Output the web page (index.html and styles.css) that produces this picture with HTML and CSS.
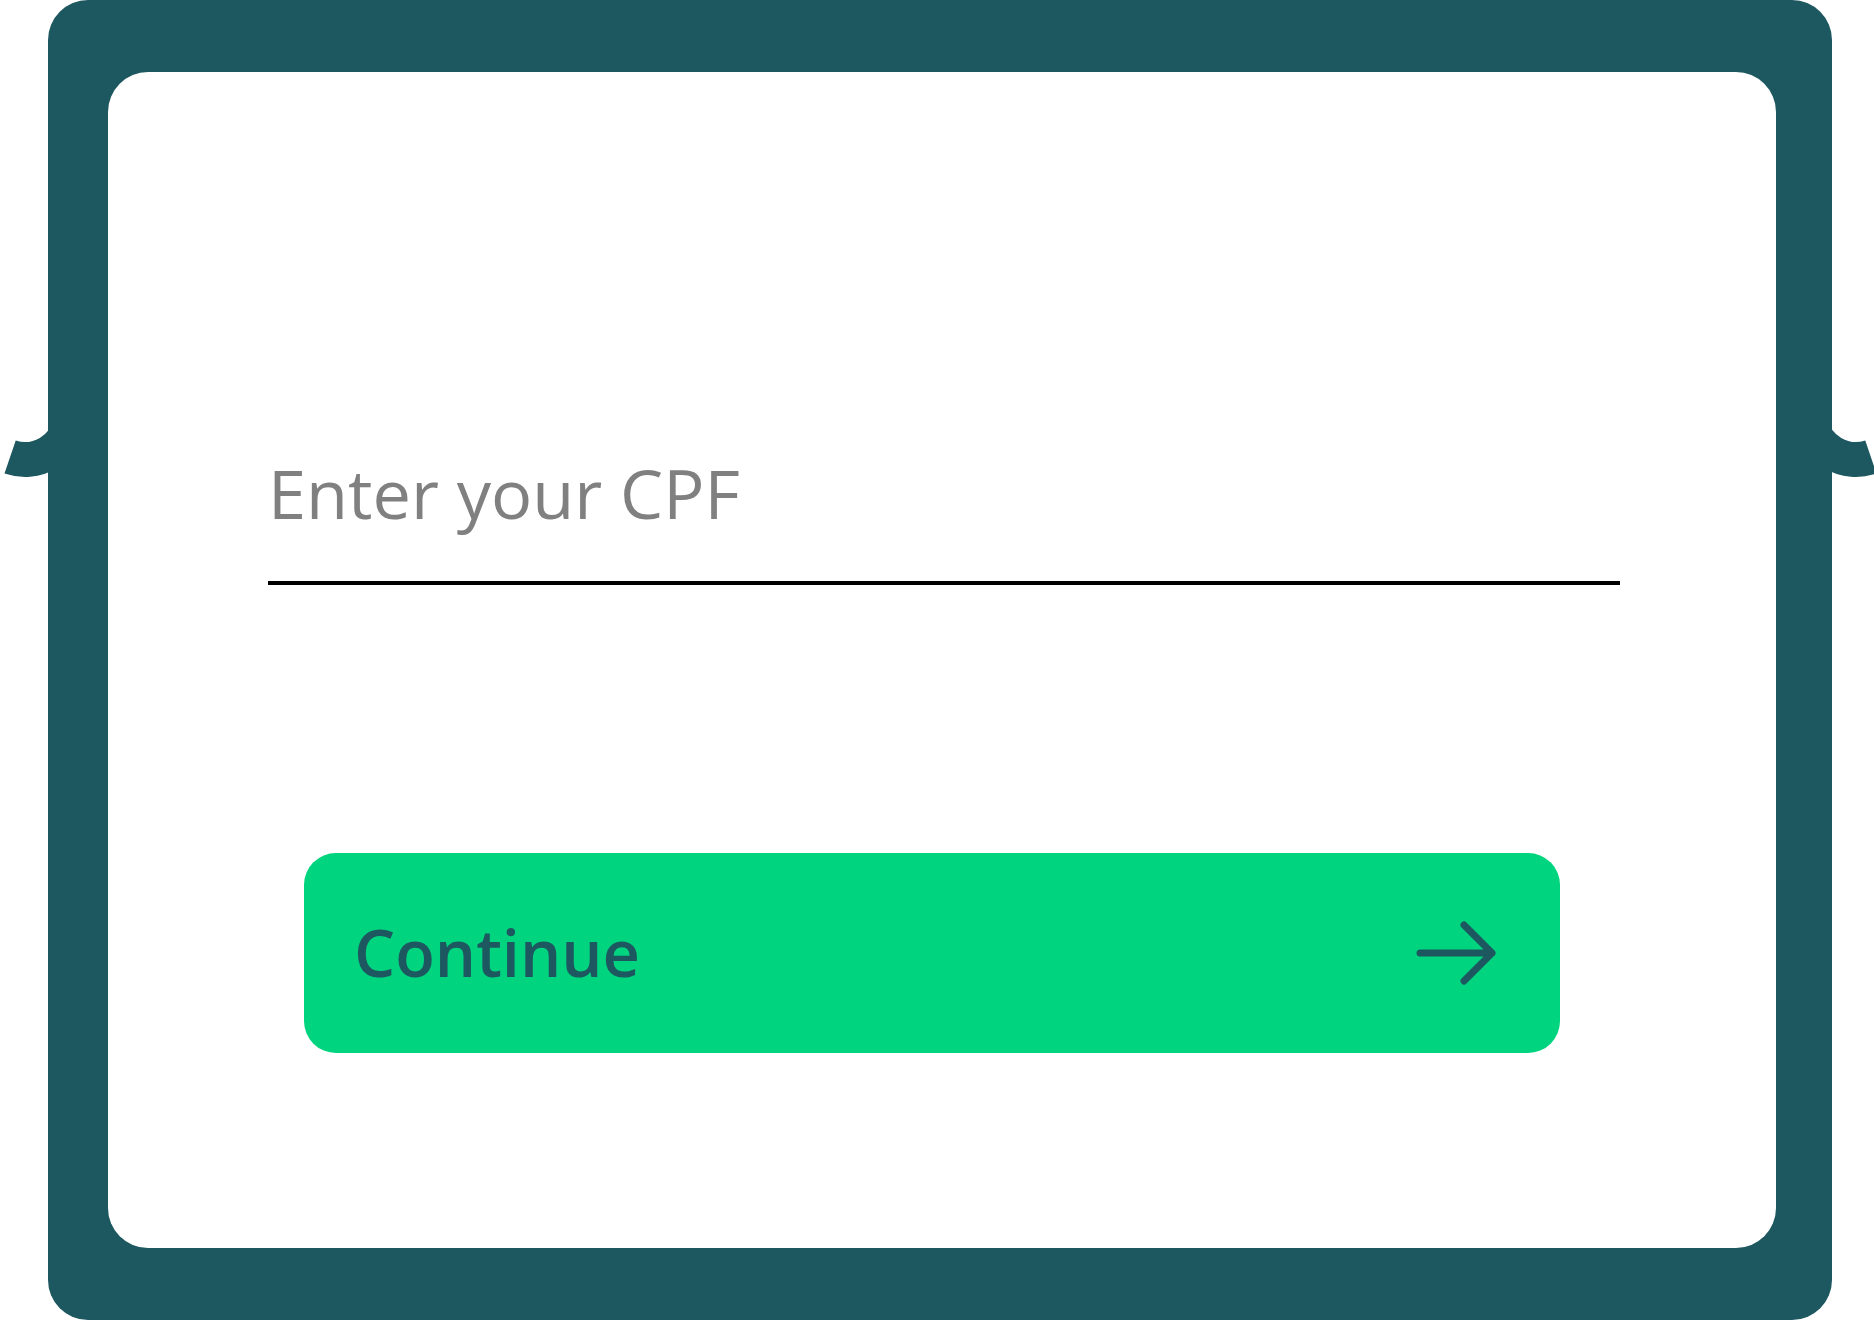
FILE: index.html
```html
<!DOCTYPE html>
<html lang="en">
<head>
<meta charset="utf-8">
<title>Enter your CPF</title>
<link rel="stylesheet" href="styles.css">
</head>
<body>
<div class="stage">
  <svg class="ear ear-left" width="60" height="110" viewBox="0 0 60 110" aria-hidden="true">
    <path d="M10.1 79 A46.5 46.5 0 0 0 70.8 43.1" fill="none" stroke="#1D5861" stroke-width="35"/>
  </svg>
  <svg class="ear ear-right" width="60" height="110" viewBox="0 0 60 110" aria-hidden="true">
    <path d="M10.1 79 A46.5 46.5 0 0 0 70.8 43.1" fill="none" stroke="#1D5861" stroke-width="35"/>
  </svg>
  <div class="frame">
    <div class="panel">
      <div class="field">
        <div class="field-label">Enter your CPF</div>
        <div class="field-line"></div>
      </div>
      <button class="continue" type="button">
        <span class="continue-text">Continue</span>
        <svg class="continue-arrow" width="96" height="80" viewBox="0 0 96 80" aria-hidden="true">
          <path d="M14 40 H86 M58 12 L86 40 L58 68" fill="none" stroke="#1D5861" stroke-width="7" stroke-linecap="round" stroke-linejoin="round"/>
        </svg>
      </button>
    </div>
  </div>
</div>
</body>
</html>
```
FILE: styles.css
```css
html, body {
  margin: 0;
  padding: 0;
  background: #ffffff;
  overflow: hidden;
}

.stage {
  position: relative;
  width: 1874px;
  height: 1320px;
}

.ear {
  position: absolute;
  top: 378px;
  display: block;
}

.ear-left {
  left: 0;
}

.ear-right {
  left: 1821px;
  transform: scaleX(-1);
}

.frame {
  position: relative;
  margin-left: 48px;
  width: 1784px;
  height: 1320px;
  box-sizing: border-box;
  padding: 72px 56px 72px 60px;
  background: #1D5861;
  border-radius: 40px;
}

.panel {
  height: 100%;
  box-sizing: border-box;
  background: #ffffff;
  border-radius: 40px;
  padding-top: 375px;
  display: flex;
  flex-direction: column;
}

.field {
  margin-left: 160px;
  width: 1352px;
}

.field-label {
  font-family: "Open Sans", sans-serif;
  font-size: 68.5px;
  line-height: 92.6px;
  color: #808080;
  font-weight: 400;
}

.field-line {
  margin-top: 41px;
  height: 4px;
  background: #000000;
}

.continue {
  margin-top: 268px;
  margin-left: 196px;
  width: 1256px;
  height: 200px;
  box-sizing: border-box;
  padding: 0 58px 0 50px;
  border: none;
  border-radius: 32px;
  background: #00D47F;
  display: flex;
  align-items: center;
  justify-content: space-between;
  cursor: pointer;
}

.continue-text {
  font-family: "Open Sans", sans-serif;
  font-weight: 600;
  font-size: 65px;
  line-height: 1;
  color: #1D5861;
}

.continue-arrow {
  display: block;
}
```
